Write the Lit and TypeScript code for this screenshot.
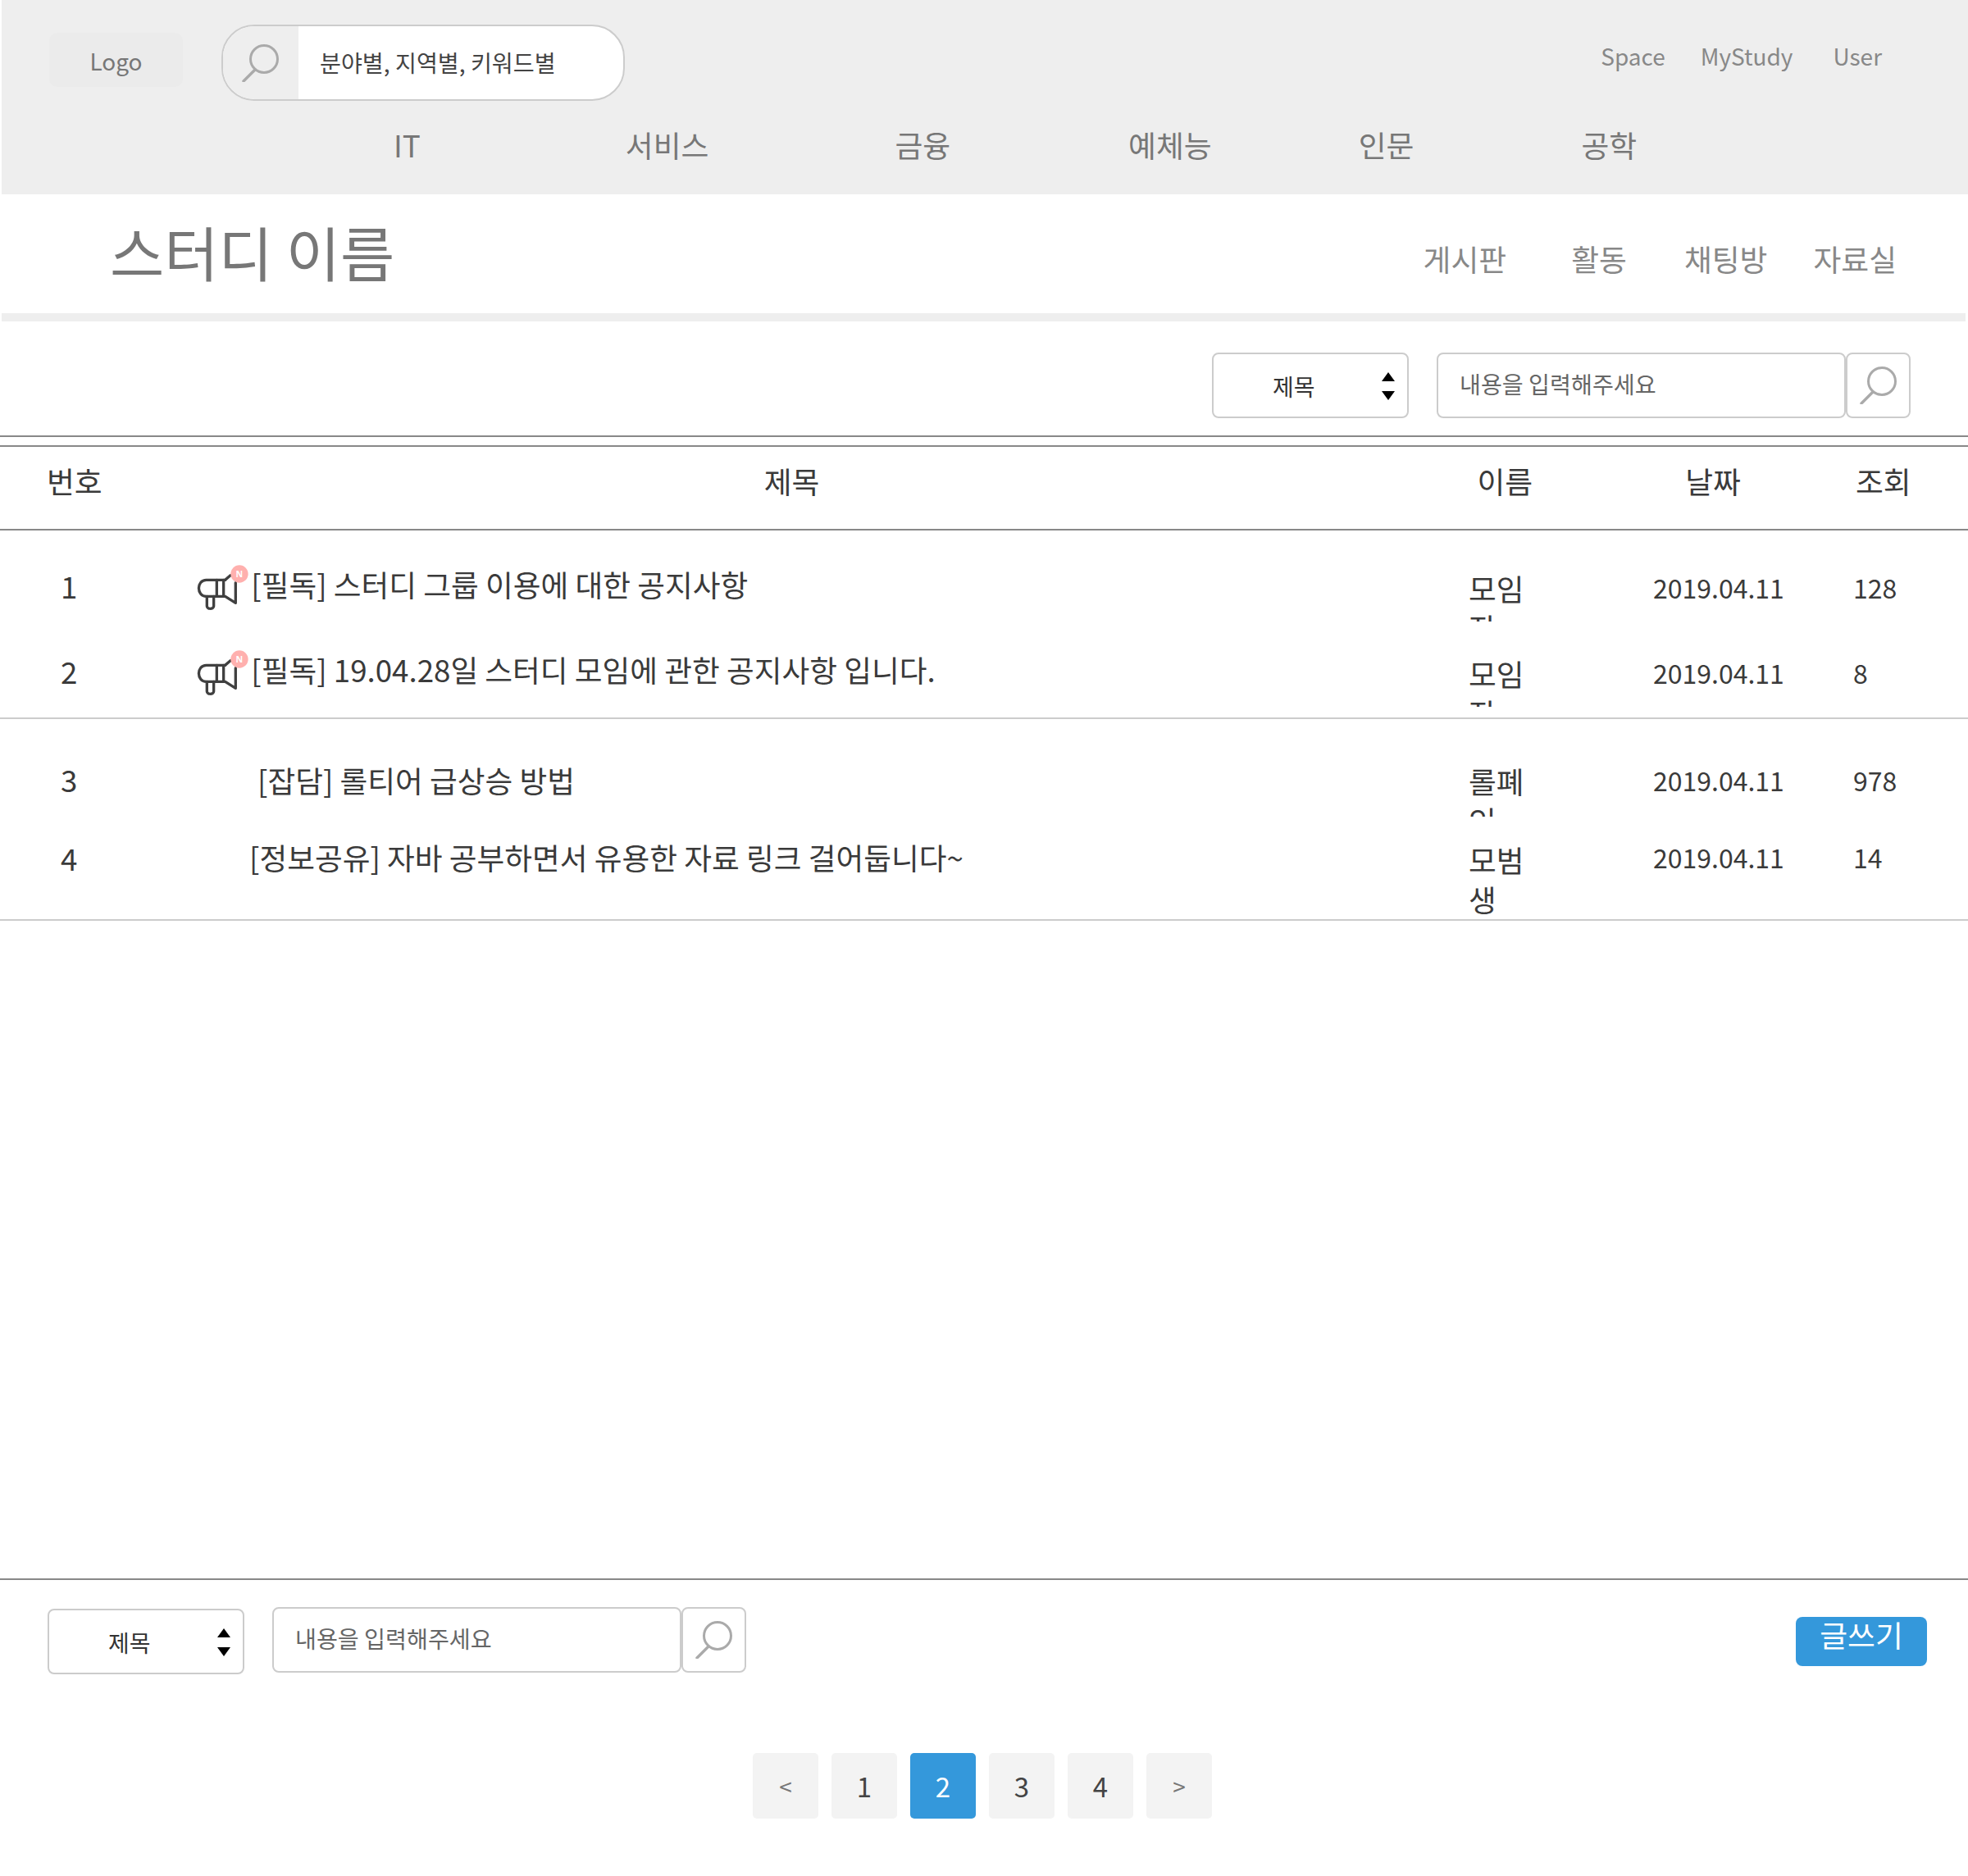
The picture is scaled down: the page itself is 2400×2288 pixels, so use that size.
import { html, css, LitElement, svg } from "lit";
import { customElement } from "lit/decorators.js";

const searchIcon = svg`<svg class="glass" viewBox="0 0 46 46" width="46" height="46">
  <circle cx="27" cy="18" r="16.5" fill="none" stroke="#aaa" stroke-width="3"/>
  <path d="M16 31 L2 45" stroke="#aaa" stroke-width="3.4" stroke-linecap="round"/>
</svg>`;

const noticeIcon = svg`<svg class="notice" viewBox="120 80 190 175" width="63.3" height="58.3">
  <g fill="none" stroke="#404040" stroke-width="10" stroke-linejoin="round" stroke-linecap="round">
    <path d="M224 138 H155 C118 138 118 198 155 198 H224 L262 222 V148"/>
    <path d="M224 138 L243 121"/>
    <path d="M193 138 V198 M218 138 V198"/>
    <path d="M157 198 V234 C157 246 182 246 182 234 V198"/>
  </g>
  <circle cx="276" cy="116" r="32" fill="#ffb0ae"/>
  <text x="276" y="127" text-anchor="middle" font-size="32" font-weight="700" fill="#fff" font-family="Noto Sans">N</text>
</svg>`;

type Post = { no: number; title: string; name: string; views: number; notice?: boolean; cls: string };

const pinned: Post[] = [
  { no: 1, title: "[필독] 스터디 그룹 이용에 대한 공지사항", name: "모임장", views: 128, notice: true, cls: "r1" },
  { no: 2, title: "[필독] 19.04.28일 스터디 모임에 관한 공지사항 입니다.", name: "모임장", views: 8, notice: true, cls: "r2" },
];
const normal: Post[] = [
  { no: 3, title: "[잡담] 롤티어 급상승 방법", name: "롤폐인", views: 978, cls: "r3" },
  { no: 4, title: "[정보공유] 자바 공부하면서 유용한 자료 링크 걸어둡니다~", name: "모범생", views: 14, cls: "r4" },
];

@customElement("app-root")
export class AppRoot extends LitElement {
  static styles = css`
    :host {
      display: block;
      width: 2400px;
      height: 2288px;
      overflow: hidden;
      background: #fff;
      font-family: "Noto Sans CJK KR", "Noto Sans", sans-serif;
      font-weight: 400;
      color: #3a3a3a;
    }
    .top {
      margin-left: 2px;
      height: 237px;
      background: #eee;
      box-sizing: border-box;
      padding-top: 30px;
    }
    .top-row {
      display: flex;
      align-items: flex-start;
      padding-left: 58px;
    }
    .logo {
      width: 163px;
      height: 66px;
      margin-top: 10px;
      border-radius: 10px;
      background: #ebebeb;
      color: #777;
      font-size: 28px;
      line-height: 68px;
      text-align: center;
    }
    .main-search {
      display: flex;
      width: 492px;
      height: 93px;
      margin-left: 47px;
      box-sizing: border-box;
      border: 2px solid #ccc;
      border-radius: 40px;
      overflow: hidden;
      background: #fff;
    }
    .main-search .icon {
      width: 92px;
      background: #eee;
      display: flex;
      align-items: center;
      justify-content: center;
    }
    .main-search .text {
      padding-left: 26px;
      font-size: 28.2px;
      line-height: 87px;
      color: #444;
    }
    .links {
      display: flex;
      margin-left: auto;
      margin-right: 105px;
      font-size: 28px;
      line-height: 44px;
      color: #888;
      margin-top: 16px;
    }
    .links span:nth-child(2) { margin-left: 43px; }
    .links span:nth-child(3) { margin-left: 49px; }
    .nav {
      display: flex;
      padding-left: 478px;
      margin-top: 28px;
      font-size: 36.8px;
      line-height: 50px;
      color: #777;
    }
    .nav span:nth-child(2) { margin-left: 250px; }
    .nav span:nth-child(3) { margin-left: 227px; }
    .nav span:nth-child(4) { margin-left: 217px; }
    .nav span:nth-child(5) { margin-left: 179px; }
    .nav span:nth-child(6) { margin-left: 204px; }
    .study {
      display: flex;
      align-items: flex-start;
      height: 145px;
      margin-left: 2px;
      padding-left: 132px;
    }
    .study h1 {
      margin: 0;
      font-size: 72px;
      font-weight: 400;
      line-height: 100px;
      color: #777;
      margin-top: 19px;
    }
    .subnav {
      display: flex;
      margin-left: auto;
      margin-right: 87px;
      margin-top: 52px;
      font-size: 36.8px;
      line-height: 52px;
      color: #888;
    }
    .subnav span:nth-child(2) { margin-left: 79px; }
    .subnav span:nth-child(3) { margin-left: 70px; }
    .subnav span:nth-child(4) { margin-left: 56px; }
    .bar {
      height: 10px;
      margin: 0 3px 0 2px;
      background: #eee;
    }
    .toolbar {
      display: flex;
      justify-content: flex-end;
      height: 139px;
      box-sizing: border-box;
      padding: 38px 70px 0 0;
    }
    .select {
      position: relative;
      width: 240px;
      height: 80px;
      box-sizing: border-box;
      border: 2px solid #ccc;
      border-radius: 8px;
      font-size: 28px;
      line-height: 78px;
      color: #333;
      padding-left: 72px;
      background: #fff;
    }
    .arrows {
      position: absolute;
      right: 15px;
      top: 22px;
      display: flex;
      flex-direction: column;
      gap: 12px;
    }
    .arrows i {
      display: block;
      width: 0;
      height: 0;
      border-left: 8px solid transparent;
      border-right: 8px solid transparent;
    }
    .arrows .up { border-bottom: 11px solid #000; }
    .arrows .down { border-top: 11px solid #000; }
    .search {
      display: flex;
      margin-left: 34px;
    }
    .search input {
      width: 499px;
      height: 80px;
      box-sizing: border-box;
      border: 2px solid #ccc;
      border-radius: 8px;
      padding: 0 0 6px 26px;
      font: inherit;
      font-size: 28.2px;
      outline: none;
      background: #fff;
    }
    .search input::placeholder { color: #666; opacity: 1; }
    .search button {
      width: 79px;
      height: 80px;
      box-sizing: border-box;
      border: 2px solid #ccc;
      border-radius: 8px;
      background: #fff;
      padding: 0;
      margin: 0;
      display: flex;
      align-items: center;
      justify-content: center;
    }
    .double {
      height: 10px;
      border-top: 2px solid #888;
    }
    .thead {
      display: flex;
      height: 100px;
      border-top: 2px solid #888;
      border-bottom: 2px solid #888;
      font-size: 36.8px;
      line-height: 82px;
    }
    .thead span:nth-child(1) { margin-left: 57px; }
    .thead span:nth-child(2) { margin-left: 807px; }
    .thead span:nth-child(3) { margin-left: 802px; }
    .thead span:nth-child(4) { margin-left: 186px; }
    .thead span:nth-child(5) { margin-left: 140px; }
    .group {
      border-bottom: 2px solid #ccc;
      box-sizing: border-box;
    }
    .group.first { height: 230px; padding-top: 46px; }
    .group.second { height: 246px; padding-top: 53px; }
    .row {
      display: grid;
      grid-template-columns: 166px 1551px 225px 244px 1fr;
      padding-left: 74px;
      font-size: 36.7px;
      line-height: 48px;
    }
    .r1, .r2 { height: 65px; }
    .r2 { margin-top: 39px; }
    .r3 { height: 66px; }
    .r4 { height: 96px; margin-top: 30px; }
    .cell-no { margin-top: -3px; }
    .r3 .cell-no { margin-top: -4px; }
    .r4 .cell-no { margin-top: -4px; }
    .cell-title {
      display: flex;
      align-items: flex-start;
      white-space: nowrap;
    }
    .r1 .cell-title { margin-top: -5px; }
    .r2 .cell-title { margin-top: -5px; }
    .notice { flex: none; margin: 0 3px 0 0; }
    .r3 .cell-title { padding-left: 74px; margin-top: -3px; }
    .r4 .cell-title { padding-left: 64px; margin-top: -5px; }
    .cell-name {
      width: 70px;
      overflow: hidden;
      word-break: break-all;
    }
    .r3 .cell-name { margin-top: -2px; }
    .r4 .cell-name { margin-top: -2px; }
    .cell-date, .cell-views { font-size: 32px; }
    .r1 .cell-date, .r1 .cell-views { margin-top: -1px; }
    .r2 .cell-date, .r2 .cell-views { margin-top: -1px; }
    .r3 .cell-date, .r3 .cell-views { margin-top: -3px; }
    .r4 .cell-date, .r4 .cell-views { margin-top: -5px; }
    .spacer {
      height: 802px;
      border-bottom: 2px solid #888;
    }
    .bottom {
      display: flex;
      align-items: flex-start;
      height: 211px;
      box-sizing: border-box;
      padding: 33px 50px 0 58px;
    }
    .bottom .select { margin-top: 2px; }
    .write {
      margin-left: auto;
      margin-top: 12px;
      width: 160px;
      height: 60px;
      border-radius: 8px;
      background: #3498db;
      color: #fff;
      font-size: 36.8px;
      line-height: 42px;
      text-align: center;
    }
    .pager {
      display: flex;
      justify-content: center;
      gap: 16px;
      padding-right: 4px;
    }
    .pager span {
      width: 80px;
      height: 80px;
      border-radius: 5px;
      background: #f3f3f3;
      color: #444;
      font-size: 33px;
      line-height: 80px;
      text-align: center;
    }
    .pager .on { background: #3498db; color: #fff; }
    .pager .arrow { color: #777; font-size: 28px; }
  `;

  private renderSelect() {
    return html`<div class="select">
      제목
      <div class="arrows"><i class="up"></i><i class="down"></i></div>
    </div>`;
  }

  private renderSearch() {
    return html`<div class="search">
      <input placeholder="내용을 입력해주세요" />
      <button>${searchIcon}</button>
    </div>`;
  }

  private renderRow(p: Post) {
    return html`<div class="row ${p.cls}">
      <div class="cell-no">${p.no}</div>
      <div class="cell-title">${p.notice ? noticeIcon : ""}<span>${p.title}</span></div>
      <div class="cell-name">${p.name}</div>
      <div class="cell-date">2019.04.11</div>
      <div class="cell-views">${p.views}</div>
    </div>`;
  }

  render() {
    return html`
      <header class="top">
        <div class="top-row">
          <div class="logo">Logo</div>
          <div class="main-search">
            <div class="icon">${searchIcon}</div>
            <div class="text">분야별, 지역별, 키워드별</div>
          </div>
          <div class="links"><span>Space</span><span>MyStudy</span><span>User</span></div>
        </div>
        <nav class="nav">
          <span>IT</span><span>서비스</span><span>금융</span><span>예체능</span><span>인문</span><span>공학</span>
        </nav>
      </header>
      <section class="study">
        <h1>스터디 이름</h1>
        <div class="subnav"><span>게시판</span><span>활동</span><span>채팅방</span><span>자료실</span></div>
      </section>
      <div class="bar"></div>
      <div class="toolbar">${this.renderSelect()}${this.renderSearch()}</div>
      <div class="double"></div>
      <div class="thead"><span>번호</span><span>제목</span><span>이름</span><span>날짜</span><span>조회</span></div>
      <div class="group first">${pinned.map((p) => this.renderRow(p))}</div>
      <div class="group second">${normal.map((p) => this.renderRow(p))}</div>
      <div class="spacer"></div>
      <div class="bottom">
        ${this.renderSelect()}${this.renderSearch()}
        <div class="write">글쓰기</div>
      </div>
      <div class="pager">
        <span class="arrow">&lt;</span><span>1</span><span class="on">2</span><span>3</span><span>4</span><span class="arrow">&gt;</span>
      </div>
    `;
  }
}
